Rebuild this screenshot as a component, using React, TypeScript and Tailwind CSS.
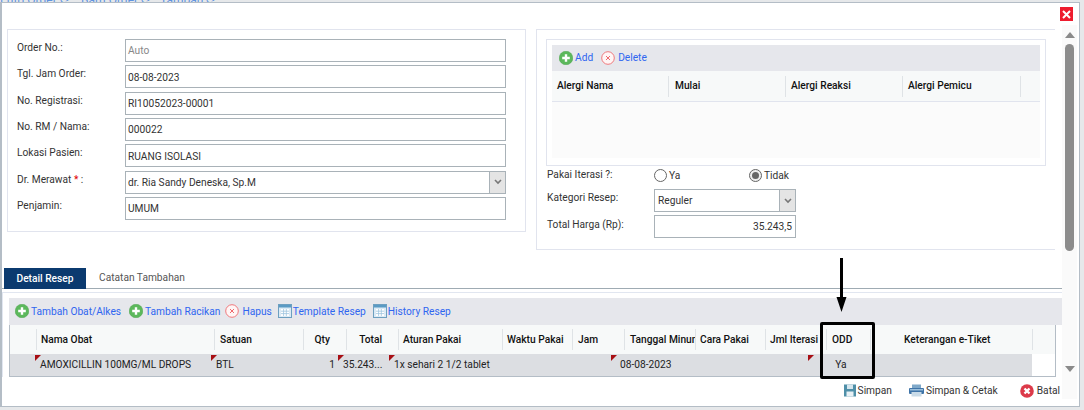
import React from "react";

const font = { fontFamily: 'Roboto, "Noto Sans", sans-serif' };

function PlusIcon() {
  return (
    <svg width="14" height="14" viewBox="0 0 14 14" className="shrink-0">
      <circle cx="7" cy="7" r="6.8" fill="#5cb85c" />
      <circle cx="7" cy="7" r="6.8" fill="none" stroke="#4aa34a" strokeWidth="0.5" />
      <path d="M7 3.2v7.6M3.2 7h7.6" stroke="#fff" strokeWidth="2.4" />
    </svg>
  );
}
function XCircleIcon() {
  return (
    <svg width="14" height="14" viewBox="0 0 14 14" className="shrink-0">
      <circle cx="7" cy="7" r="6.3" fill="#fff5f5" stroke="#f0787c" strokeWidth="1" />
      <path d="M5 5l4 4M9 5l-4 4" stroke="#ee6a6e" strokeWidth="1" />
    </svg>
  );
}
function GridIcon() {
  return (
    <svg width="14" height="14" viewBox="0 0 14 14" className="shrink-0">
      <rect x="0.5" y="0.5" width="13" height="13" fill="#dbeaf5" stroke="#6d9fc0" />
      <rect x="1" y="1" width="12" height="2.5" fill="#5a9ac4" />
      <path d="M3 5h8v7H3z" fill="#fff" />
      <path d="M3 7.2h8M3 9.6h8M5.6 5v7M8.3 5v7" stroke="#9cc3de" strokeWidth="0.8" />
    </svg>
  );
}
function SaveIcon() {
  return (
    <svg width="12" height="13" viewBox="0 0 12 13" className="shrink-0">
      <rect x="0" y="0.5" width="12" height="12" fill="#4f8fa8" />
      <rect x="3" y="0.5" width="6" height="4.5" fill="#d6e6ee" />
      <rect x="2.5" y="7.5" width="7" height="5" fill="#e8f1f5" />
    </svg>
  );
}
function PrintIcon() {
  return (
    <svg width="15" height="13" viewBox="0 0 15 13" className="shrink-0">
      <rect x="3" y="0.5" width="9" height="4" fill="#7fa8c9" />
      <rect x="0" y="4" width="15" height="6" rx="1" fill="#3f74a8" />
      <rect x="1" y="5" width="13" height="1.5" fill="#9cc0dc" />
      <rect x="2.5" y="8" width="10" height="4.5" fill="#c9dbe8" />
    </svg>
  );
}
function BatalIcon() {
  return (
    <svg width="14" height="14" viewBox="0 0 14 14" className="shrink-0">
      <circle cx="7" cy="7" r="6.8" fill="#dc3a4a" />
      <path d="M4.5 4.5l5 5M9.5 4.5l-5 5" stroke="#fff" strokeWidth="2.4" />
    </svg>
  );
}
function Chevron() {
  return (
    <svg width="8" height="6" viewBox="0 0 8 6">
      <path d="M1 1l3 3 3-3" fill="none" stroke="#777" strokeWidth="1.6" />
    </svg>
  );
}
function Corner() {
  return (
    <span className="absolute left-0 top-[1px] w-0 h-0 border-t-[6px] border-t-[#a80f14] border-r-[6px] border-r-transparent" />
  );
}

function Field({ label, value, muted, select, required }: { label: string; value: string; muted?: boolean; select?: boolean; required?: boolean }) {
  return (
    <div className="flex h-[23px]">
      <div className="w-[108px] pt-[1px] leading-[15px] text-[#333]">
        {label}
        {required && <span className="text-[#e00000]"> *</span>}
        {required ? " :" : ""}
      </div>
      <div className="w-[381px] h-full border border-[#a9b2b8] flex items-center bg-white">
        <span className={"flex-1 pl-[2px] pt-[1px] " + (muted ? "text-[#888]" : "text-[#333]")}>{value}</span>
        {select && (
          <span className="w-[16px] h-full bg-[#e4e4e4] border-l border-[#a9b2b8] flex items-center justify-center">
            <Chevron />
          </span>
        )}
      </div>
    </div>
  );
}

function LinkBtn({ icon, text, cls }: { icon: React.ReactNode; text: string; cls?: string }) {
  return (
    <span className={"flex items-center text-[#2f66f0] " + (cls ?? "gap-[2px]")}>
      {icon}
      <span>{text}</span>
    </span>
  );
}

function HeadCell({ w, text, align }: { w: string; text?: string; align?: string }) {
  return (
    <div className={w + " h-[21px] border-l border-[#dfe3e6] flex items-center font-medium text-[#111] shrink-0 overflow-hidden whitespace-nowrap " + (align ?? "pl-[5px]")}>
      {text}
    </div>
  );
}

function RowCell({ w, text, corner, cls }: { w: string; text?: string; corner?: boolean; cls?: string }) {
  return (
    <div className={w + " relative h-full flex items-center shrink-0 whitespace-nowrap text-[#222] " + (cls ?? "pl-[5px]")}>
      {corner && <Corner />}
      {text}
    </div>
  );
}

export default function App() {
  return (
    <div className="relative w-[1084px] h-[410px] overflow-hidden bg-[#e6e8ea] text-[10.2px]" style={font}>
      <div className="h-[2px] overflow-hidden flex text-[#5f93e0] text-[12px] leading-[4px]">
        <div className="flex -translate-y-[2px] whitespace-nowrap">
          <span className="w-[81px]">Entri Order ⟳</span>
          <span className="w-[79px]">Baru Order ⟳</span>
          <span>Tambah ⟳</span>
        </div>
      </div>
      <div className="w-[1080px] h-[405px] bg-white border-t border-l-2 border-r border-b border-[#b4bdc6] flex flex-col">
        <div className="flex h-[374px]">
          <div className="w-[1060px] h-full overflow-hidden shrink-0">
            <div className="flex items-start pt-[26px] pl-[5px] gap-[10px]">
              <div className="w-[519px] h-[203px] border border-[#e1e4ee] pt-[9px] pl-[9px] flex flex-col gap-[3.33px]">
                <Field label="Order No.:" value="Auto" muted />
                <Field label="Tgl. Jam Order:" value="08-08-2023" />
                <Field label="No. Registrasi:" value="RI10052023-00001" />
                <Field label="No. RM / Nama:" value="000022" />
                <Field label="Lokasi Pasien:" value="RUANG ISOLASI" />
                <Field label="Dr. Merawat" value="dr. Ria Sandy Deneska, Sp.M" select required />
                <Field label="Penjamin:" value="UMUM" />
              </div>
              <div className="w-[519px] h-[221px] border-t border-l border-b border-[#e1e4ee] pt-[9px] pl-[9px]">
                <div className="w-[500px] h-[127px] border border-[#e1e4ee] p-[5px] pb-[7px] flex flex-col">
                  <div className="h-[26px] bg-[#e6e7ec] flex items-center pl-[7px] gap-[8px]">
                    <LinkBtn icon={<PlusIcon />} text="Add" />
                    <LinkBtn icon={<XCircleIcon />} text="Delete" cls="gap-[3px]" />
                  </div>
                  <div className="h-[31px] bg-[#f7f9f9] border-b border-[#e1e4ee] flex items-center">
                    <div className="w-[116px] pl-[5px] font-medium text-[#111]">Alergi Nama</div>
                    <HeadCell w="w-[117px]" text="Mulai" align="pl-[6px]" />
                    <HeadCell w="w-[117px]" text="Alergi Reaksi" align="pl-[5px]" />
                    <HeadCell w="w-[118px]" text="Alergi Pemicu" align="pl-[5px]" />
                    <HeadCell w="w-[20px]" />
                  </div>
                  <div className="flex-1 bg-[#fbfbfb]" />
                </div>
                <div className="h-[23px] flex pl-[1px] text-[#333]">
                  <div className="w-[107px] pt-[1px] leading-[15px]">Pakai Iterasi ?:</div>
                  <div className="w-[95px] flex items-start pt-[3px] gap-[2px] leading-[13px]">
                    <span className="w-[13px] h-[13px] rounded-full border border-[#666] bg-white" />
                    <span>Ya</span>
                  </div>
                  <div className="flex items-start pt-[3px] gap-[2px] leading-[13px]">
                    <span className="w-[13px] h-[13px] rounded-full border border-[#666] bg-[#eee] flex items-center justify-center">
                      <span className="w-[7px] h-[7px] rounded-full bg-[#666]" />
                    </span>
                    <span>Tidak</span>
                  </div>
                </div>
                <div className="h-[23px] flex pl-[1px] text-[#333]">
                  <div className="w-[107px] pt-[1px] leading-[15px]">Kategori Resep:</div>
                  <div className="w-[142px] h-full border border-[#a9b2b8] flex items-center">
                    <span className="flex-1 pl-[3px] pt-[1px]">Reguler</span>
                    <span className="w-[16px] h-full bg-[#e4e4e4] border-l border-[#a9b2b8] flex items-center justify-center">
                      <Chevron />
                    </span>
                  </div>
                </div>
                <div className="h-[23px] flex pl-[1px] text-[#333] mt-[3px]">
                  <div className="w-[107px] pt-[2px] leading-[15px]">Total Harga (Rp):</div>
                  <div className="w-[142px] h-full border border-[#a9b2b8] flex items-center justify-end pr-[3px] pt-[1px]">35.243,5</div>
                </div>
              </div>
            </div>

            <div className="mt-[18px] h-[21px] border-b border-[#9fabb3] pl-[2px] flex items-stretch">
              <div className="w-[82px] h-[21px] bg-[#0b3a6f] text-white flex items-center justify-center font-medium">Detail Resep</div>
              <div className="pl-[13px] flex items-center text-[#555]">Catatan Tambahan</div>
            </div>
            <div className="mt-[3px] h-[85px] border-t border-l border-[#e1e6f0] pl-[6px] pt-[5px]">
              <div className="h-[27px] bg-[#e6e7ec] flex items-center pl-[6px]">
                <LinkBtn icon={<PlusIcon />} text="Tambah Obat/Alkes" />
                <LinkBtn icon={<PlusIcon />} text="Tambah Racikan" cls="gap-[2px] ml-[8px]" />
                <LinkBtn icon={<XCircleIcon />} text="Hapus" cls="gap-[3px] ml-[5px]" />
                <LinkBtn icon={<GridIcon />} text="Template Resep" cls="gap-[1px] ml-[6px]" />
                <LinkBtn icon={<GridIcon />} text="History Resep" cls="gap-[1px] ml-[7px]" />
              </div>
              <div className="w-[1047px] border-l border-r border-b border-[#b4bdc6]">
                <div className="h-[29px] bg-[#f7f9f9] flex items-center">
                  <div className="w-[26px] shrink-0" />
                  <HeadCell w="w-[178px]" text="Nama Obat" align="pl-[4px]" />
                  <HeadCell w="w-[89px]" text="Satuan" />
                  <HeadCell w="w-[43px]" text="Qty" align="justify-end pr-[16px]" />
                  <HeadCell w="w-[52px]" text="Total" align="justify-end pr-[16px]" />
                  <HeadCell w="w-[104px]" text="Aturan Pakai" align="pl-[4px]" />
                  <HeadCell w="w-[70px]" text="Waktu Pakai" align="pl-[4px]" />
                  <HeadCell w="w-[52px]" text="Jam" />
                  <HeadCell w="w-[71px]" text="Tanggal Minum" />
                  <HeadCell w="w-[70px]" text="Cara Pakai" align="pl-[4px]" />
                  <HeadCell w="w-[61px]" text="Jml Iterasi" align="pl-[4px]" />
                  <HeadCell w="w-[44px]" text="ODD" />
                  <HeadCell w="w-[162px]" text="Keterangan e-Tiket" align="pl-[33px]" />
                  <HeadCell w="w-[23px]" />
                </div>
                <div className="h-[22px] flex">
                  <div className="w-[1022px] h-full bg-[#dcdee2] flex">
                    <div className="w-[25px] shrink-0" />
                    <RowCell w="w-[176px]" text="AMOXICILLIN 100MG/ML DROPS" corner />
                    <RowCell w="w-[89px]" text="BTL" corner />
                    <RowCell w="w-[38px]" text="1" cls="justify-end pr-[3px]" />
                    <RowCell w="w-[51px]" text="35.243..." corner />
                    <RowCell w="w-[104px]" text="1x sehari 2 1/2 tablet" corner />
                    <RowCell w="w-[66px]" />
                    <RowCell w="w-[52px]" />
                    <RowCell w="w-[71px]" text="08-08-2023" corner cls="pl-[9px]" />
                    <RowCell w="w-[66px]" />
                    <RowCell w="w-[60px]" />
                    <RowCell w="w-[66px]" text="Ya" corner cls="justify-center" />
                  </div>
                </div>
              </div>
            </div>
          </div>
          <div className="w-[15px] h-full mt-[22px] bg-[#fafafa] flex flex-col items-center pt-[7px]">
            <svg width="10" height="6" viewBox="0 0 10 6" className="shrink-0"><path d="M5 0l5 6H0z" fill="#8a8a8a" /></svg>
            <div className="w-[9px] h-[207px] mt-[6px] rounded-full bg-[#8c8c8c] shrink-0" />
            <svg width="10" height="6" viewBox="0 0 10 6" className="shrink-0 mt-[115px]"><path d="M0 0h10L5 6z" fill="#8a8a8a" /></svg>
          </div>
        </div>
        <div className="flex-1 flex items-center justify-end text-[#333] pb-[1px]">
          <span className="flex items-center gap-[2px] mr-[17px]"><SaveIcon /><span>Simpan</span></span>
          <span className="flex items-center gap-[2px] mr-[22px]"><PrintIcon /><span>Simpan &amp; Cetak</span></span>
          <span className="flex items-center gap-[3px] mr-[19px]"><BatalIcon /><span>Batal</span></span>
        </div>
      </div>

      <button className="absolute left-[1060px] top-[7px] w-[13px] h-[14px] bg-[#ee1c2e] flex items-center justify-center">
        <svg width="9" height="9" viewBox="0 0 9 9"><path d="M1 1l7 7M8 1L1 8" stroke="#fff" strokeWidth="2" /></svg>
      </button>

      <div className="absolute left-[820px] top-[322px] w-[55px] h-[57px] border-[3px] border-black rounded-[2px]" />
      <svg className="absolute left-[836px] top-[258px]" width="11" height="54" viewBox="0 0 11 54">
        <path d="M4 0h3v39h3.5L5.5 54 .5 39H4z" fill="#000" />
      </svg>
    </div>
  );
}
